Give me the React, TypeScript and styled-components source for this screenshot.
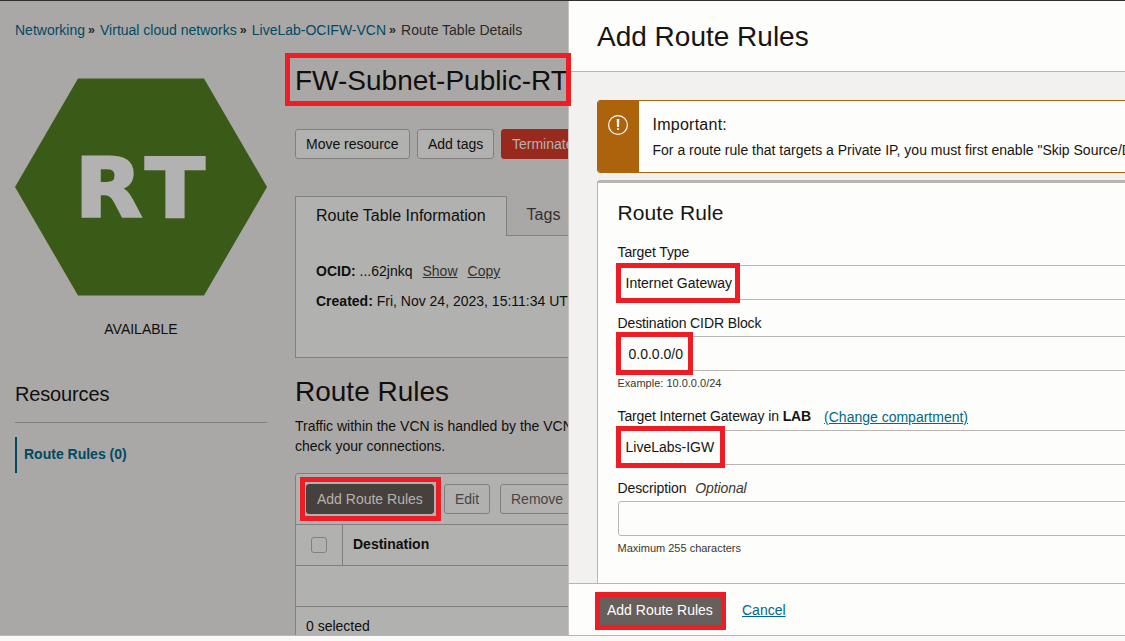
import React from "react";
import styled, { createGlobalStyle } from "styled-components";

const GlobalStyle = createGlobalStyle`
  * { box-sizing: border-box; }
  body { margin: 0; overflow: hidden; }
`;

const Frame = styled.div`
  position: relative;
  width: 1125px;
  height: 641px;
  overflow: hidden;
  display: flex;
  flex-direction: column;
  border-top: 1px solid #322d2e;
  background: #faf9f7;
  font-family: "Liberation Sans", Arial, sans-serif;
  font-size: 14px;
  line-height: 20px;
  color: #161513;
  white-space: nowrap;
`;

const Split = styled.div`
  display: flex;
  height: 635px;
  border-bottom: 1px solid #bbb5af;
`;

const Page = styled.main`
  width: 569px;
  flex: none;
  overflow: hidden;
  padding: 19px 0 0 15px;
  background: #aaa8a6;
  border-right: 1px solid #c9c2ba;
  color: #100f0e;
`;

const Breadcrumbs = styled.nav`
  display: flex;
  height: 20px;
  color: #2b2826;
`;

const Crumb = styled.a`
  color: #004a63;
`;

const Separator = styled.span`
  width: 15px;
  padding-left: 3px;
  font-size: 12.5px;
  font-weight: bold;
`;

const Columns = styled.div`
  display: flex;
  gap: 28px;
  margin-top: 20px;
`;

const Sidebar = styled.aside`
  width: 252px;
  flex: none;
  padding-top: 18px;
`;

const Hexagon = styled.svg`
  display: block;
`;

const Status = styled.div`
  margin-top: 23px;
  text-align: center;
`;

const ResourcesTitle = styled.h3`
  margin: 41px 0 14px;
  padding-bottom: 14px;
  border-bottom: 1px solid #81807e;
  font-size: 20px;
  line-height: 28px;
  letter-spacing: -0.15px;
  font-weight: normal;
`;

const ResourceLink = styled.a`
  display: block;
  height: 36px;
  padding: 7px 0 0 7px;
  border-left: 2px solid #004a63;
  color: #004a63;
  font-weight: bold;
`;

const Content = styled.section`
  width: 700px;
  flex: none;
`;

const Title = styled.h1`
  margin: 0;
  padding-top: 1px;
  height: 40px;
  font-size: 28px;
  line-height: 40px;
  font-weight: normal;
`;

const Actions = styled.div<{ $gap: number; $top?: number }>`
  display: flex;
  gap: ${(p) => p.$gap}px;
  margin-top: ${(p) => p.$top ?? 0}px;
`;

const Button = styled.button<{ $kind?: "danger" | "dark" | "muted"; $width: number }>`
  width: ${(p) => p.$width}px;
  height: 30px;
  padding: 0 0 0 10px;
  text-align: left;
  font: inherit;
  line-height: 28px;
  border-radius: 3px;
  border: 1px solid
    ${(p) => (p.$kind === "danger" ? "#972a1d" : p.$kind === "dark" ? "#47413e" : "#81807e")};
  background: ${(p) =>
    p.$kind === "danger" ? "#972a1d" : p.$kind === "dark" ? "#47413e" : "#b1b1af"};
  color: ${(p) =>
    p.$kind === "danger" || p.$kind === "dark" ? "#b6b2ae" : p.$kind === "muted" ? "#494441" : "#100f0e"};
`;

const Tabs = styled.div`
  display: flex;
  height: 40px;
  margin-top: 37px;
  font-size: 16px;
`;

const Tab = styled.div<{ $active?: boolean }>`
  padding: ${(p) => (p.$active ? "9px 20px 0" : "8px 20px 0")};
  border: 1px solid #81807e;
  border-bottom: 0;
  background: #b1b1af;
  ${(p) =>
    !p.$active &&
    `flex: 1; border: 0; border-bottom: 1px solid #81807e; margin-top: 1px; background: none; color: #33302e;`}
`;

const Panel = styled.div`
  height: 122px;
  padding: 25px 20px 0;
  border: 1px solid #81807e;
  border-top: 0;
  background: #b1b1af;
`;

const Detail = styled.div`
  height: 30px;
`;

const DetailLink = styled.a`
  margin-left: 10px;
  color: #33302e;
  text-decoration: underline;
`;

const SectionTitle = styled.h2`
  margin: 14px 0 4px;
  font-size: 28px;
  line-height: 40px;
  font-weight: normal;
`;

const Table = styled.div`
  margin-top: 17px;
  border: 1px solid #81807e;
  border-radius: 3px;
  background: #b1b1af;
`;

const Toolbar = styled.div`
  padding: 10px;
  height: 51px;
  border-bottom: 1px solid #81807e;
`;

const HeadRow = styled.div`
  display: flex;
  height: 41px;
  border-bottom: 1px solid #81807e;
  font-weight: bold;
`;

const CheckCell = styled.div`
  width: 47px;
  padding: 12px 0 0 15px;
  border-right: 1px solid #81807e;
`;

const Checkbox = styled.div`
  width: 16px;
  height: 16px;
  border: 1px solid #81807e;
  border-radius: 3px;
`;

const HeadCell = styled.div`
  padding: 9px 10px;
`;

const EmptyRow = styled.div`
  height: 41px;
  border-bottom: 1px solid #81807e;
`;

const Selection = styled.div`
  padding: 9px 10px;
`;

const Drawer = styled.aside`
  width: 556px;
  overflow: hidden;
  display: flex;
  flex-direction: column;
  background: #f3f1f0;
`;

const DrawerHead = styled.header`
  height: 71px;
  padding: 15px 28px 0;
  border-bottom: 1px solid #bbb5af;
  background: #fdfdfb;
`;

const DrawerBody = styled.div`
  flex: 1;
  min-height: 0;
  width: 640px;
  overflow: hidden;
  padding: 28px 0 0 28px;
`;

const Alert = styled.div`
  display: flex;
  height: 73px;
  border: 1px solid #ac630c;
  border-radius: 3px;
  background: #fdfdfb;
  overflow: hidden;
`;

const AlertIcon = styled.div`
  width: 41px;
  flex: none;
  padding: 14px 0 0 10px;
  background: #ac630c;
`;

const AlertText = styled.div`
  padding: 13px 14px 0 13.5px;
`;

const AlertTitle = styled.div`
  margin-bottom: 5px;
  font-size: 16px;
  line-height: 21px;
  letter-spacing: 0.25px;
`;

const Card = styled.div`
  height: 500px;
  margin-top: 7px;
  padding: 18px 20px 0 19.5px;
  border: 1px solid #bbb5af;
  border-top-width: 3px;
  border-radius: 3px;
  background: #fdfdfb;
`;

const CardTitle = styled.h2`
  margin: 0 0 17px;
  font-size: 21px;
  line-height: 24px;
  letter-spacing: 0.1px;
  font-weight: normal;
`;

const Label = styled.div<{ $top?: number; $height?: number }>`
  margin-top: ${(p) => p.$top ?? 0}px;
  height: ${(p) => p.$height ?? 23}px;
  letter-spacing: -0.11px;
`;

const Field = styled.div<{ $indent?: number; $rise?: number }>`
  height: 35px;
  padding: ${(p) => 7 - (p.$rise ?? 0)}px 0 0 ${(p) => p.$indent ?? 7}px;
  border: 1px solid #bbb5af;
  border-radius: 3px;
`;

const Hint = styled.div`
  margin-top: 4px;
  font-size: 11px;
  line-height: 16px;
  color: #3a3632;
`;

const Link = styled.a<{ $left: number; $drop?: number }>`
  display: inline-block;
  margin-left: ${(p) => p.$left}px;
  padding-top: ${(p) => p.$drop ?? 0}px;
  color: #00688c;
  letter-spacing: 0;
  text-decoration: underline;
`;

const Gateway = styled.div`
  display: flex;
  gap: 4px;
  height: 24px;
  margin-top: 15px;
`;

const GatewayLabel = styled.span`
  letter-spacing: -0.11px;
`;

const Optional = styled.em`
  margin-left: 9px;
  color: #3a3632;
`;

const DrawerFoot = styled.footer`
  display: flex;
  align-items: flex-start;
  height: 52px;
  padding: 12px 27px 0;
  border-top: 1px solid #bbb5af;
  background: #fdfdfb;
`;

const Submit = styled.button`
  width: 130px;
  height: 30px;
  padding: 0 0 2px 11px;
  border: 0;
  background: #665f5b;
  color: #fff;
  font: inherit;
  text-align: left;
`;

const Marker = styled.div<{ $x: number; $y: number; $w: number; $h: number }>`
  position: absolute;
  left: ${(p) => p.$x}px;
  top: ${(p) => p.$y - 1}px;
  width: ${(p) => p.$w}px;
  height: ${(p) => p.$h}px;
  border: 5px solid #ee1c24;
`;

export default function App() {
  return (
    <Frame>
      <GlobalStyle />
      <Split>
        <Page>
          <Breadcrumbs>
            <Crumb>Networking</Crumb>
            <Separator>»</Separator>
            <Crumb>Virtual cloud networks</Crumb>
            <Separator>»</Separator>
            <Crumb>LiveLab-OCIFW-VCN</Crumb>
            <Separator>»</Separator>
            <span>Route Table Details</span>
          </Breadcrumbs>
          <Columns>
            <Sidebar>
              <Hexagon width="252" height="218" viewBox="0 0 252 218">
                <path d="M0 109 63 .5h126L252 109l-63 108.500H63Z" fill="#395b17" />
                <text
                  x="56.500 122.900"
                  y="138.700"
                  transform="scale(1.06 1)"
                  fontFamily="DejaVu Sans, sans-serif"
                  fontWeight="bold"
                  fontSize="82.300"
                  fill="#b2b2b2"
                  stroke="#b2b2b2"
                  strokeWidth="2.600"
                >
                  RT
                </text>
              </Hexagon>
              <Status>AVAILABLE</Status>
              <ResourcesTitle>Resources</ResourcesTitle>
              <ResourceLink>Route Rules (0)</ResourceLink>
            </Sidebar>
            <Content>
              <Title>FW-Subnet-Public-RT</Title>
              <Actions $gap={7} $top={29}>
                <Button $width={115}>Move resource</Button>
                <Button $width={77}>Add tags</Button>
                <Button $width={90} $kind="danger">Terminate</Button>
              </Actions>
              <Tabs>
                <Tab $active>Route Table Information</Tab>
                <Tab>Tags</Tab>
              </Tabs>
              <Panel>
                <Detail>
                  <b>OCID:</b> ...62jnkq<DetailLink>Show</DetailLink>
                  <DetailLink>Copy</DetailLink>
                </Detail>
                <Detail>
                  <b>Created:</b> Fri, Nov 24, 2023, 15:11:34 UTC
                </Detail>
              </Panel>
              <SectionTitle>Route Rules</SectionTitle>
              <div>Traffic within the VCN is handled by the VCN</div>
              <div>check your connections.</div>
              <Table>
                <Toolbar>
                  <Actions $gap={10}>
                    <Button $width={128} $kind="dark">Add Route Rules</Button>
                    <Button $width={46} $kind="muted">Edit</Button>
                    <Button $width={80} $kind="muted">Remove</Button>
                  </Actions>
                </Toolbar>
                <HeadRow>
                  <CheckCell>
                    <Checkbox />
                  </CheckCell>
                  <HeadCell>Destination</HeadCell>
                </HeadRow>
                <EmptyRow />
                <Selection>0 selected</Selection>
              </Table>
            </Content>
          </Columns>
        </Page>
        <Drawer>
          <DrawerHead>
            <Title>Add Route Rules</Title>
          </DrawerHead>
          <DrawerBody>
            <Alert>
              <AlertIcon>
                <svg width="20" height="20" viewBox="0 0 20 20" fill="none" stroke="#fdfdfb">
                  <circle cx="10" cy="10" r="9.400" strokeWidth="1.200" />
                  <path d="M8.700 4h2.600l-.3 8H9ZM9 13.200h2v1.800H9Z" fill="#fdfdfb" stroke="none" />
                </svg>
              </AlertIcon>
              <AlertText>
                <AlertTitle>Important:</AlertTitle>
                For a route rule that targets a Private IP, you must first enable "Skip Source/D
              </AlertText>
            </Alert>
            <Card>
              <CardTitle>Route Rule</CardTitle>
              <Label>Target Type</Label>
              <Field>Internet Gateway</Field>
              <Label $top={13}>Destination CIDR Block</Label>
              <Field $indent={10}>0.0.0.0/0</Field>
              <Hint>Example: 10.0.0.0/24</Hint>
              <Gateway>
                <GatewayLabel>
                  Target Internet Gateway in <b>LAB</b>
                </GatewayLabel>
                <Link $left={9} $drop={1}>(Change compartment)</Link>
              </Gateway>
              <Field $rise={1}>LiveLabs-IGW</Field>
              <Label $top={13}>
                Description<Optional>Optional</Optional>
              </Label>
              <Field />
              <Hint>Maximum 255 characters</Hint>
            </Card>
          </DrawerBody>
          <DrawerFoot>
            <Submit>Add Route Rules</Submit>
            <Link $left={16} $drop={4}>Cancel</Link>
          </DrawerFoot>
        </Drawer>
      </Split>
      <Marker $x={285} $y={53} $w={286} $h={53} />
      <Marker $x={300} $y={477} $w={141} $h={44} />
      <Marker $x={616} $y={263} $w={124} $h={40} />
      <Marker $x={616} $y={332} $w={77} $h={43} />
      <Marker $x={616} $y={426} $w={109} $h={42} />
      <Marker $x={595} $y={592} $w={131} $h={38} />
    </Frame>
  );
}
